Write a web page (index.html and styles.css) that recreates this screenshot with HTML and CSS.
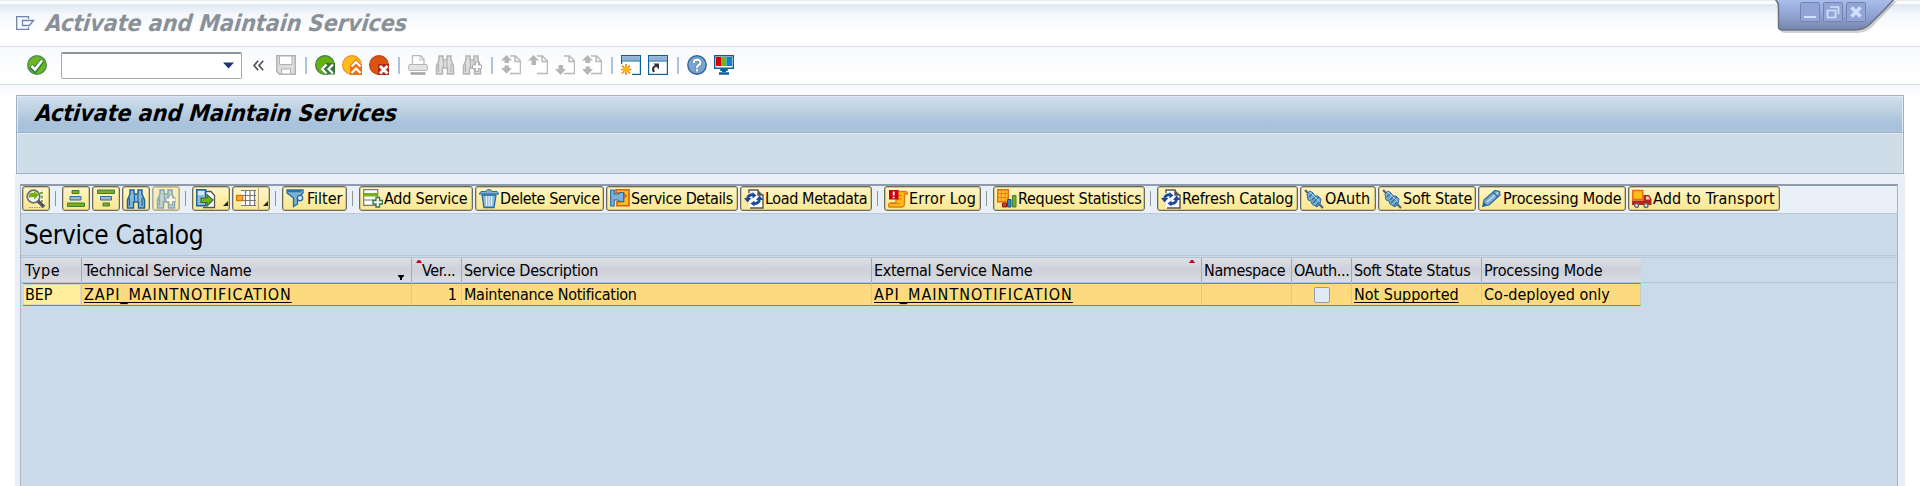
FILE: index.html
```html
<!DOCTYPE html>
<html lang="en">
<head>
<meta charset="utf-8">
<title>Activate and Maintain Services</title>
<link rel="stylesheet" href="styles.css">
</head>
<body>
<svg class="defs" width="0" height="0">
  <symbol id="page" viewBox="0 0 20 20"><path d="M9 1h5.500l5 5v12.500H9M14 1v5.500h5" fill="#fff" stroke="#b9b9b9" stroke-width="1.500"/></symbol>
  <symbol id="binoc" viewBox="0 0 20 20"><path d="M4 1h4v4h4V1h4v4l2.500 6v8h-6v-6h-5v6h-6v-8L4 5z" fill="var(--f)" stroke="var(--s)" stroke-width="1.500"/><path d="M3.500 9v8M16 9v8M8.500 6v6M12 6v6" stroke="var(--s)" stroke-width="1.200"/></symbol>
  <symbol id="reload" viewBox="0 0 20 20"><path d="M5 1h9.500l4.500 4.500V19H5z" fill="#fff"/><path d="M5 4V1h9v5h5v13H6" fill="none" stroke="#555" stroke-width="1.400"/><path d="M14 1l5 5h-5z" fill="#555"/><path d="M3.500 10c0-3 3-5 6-4M15.500 10c0 3.500-3 5-6 4.500" fill="none" stroke="#1f4a9c" stroke-width="2.800"/><path d="M0 9h7.500l-4 4.500zM12 11h7.500l-4-4.500z" fill="#1f4a9c"/><path d="M8.500 3l4 3.500-4 3zM10.500 11.500l-4 3 4 3z" fill="#1f4a9c"/></symbol>
  <symbol id="connector" viewBox="0 0 20 20"><path d="M1 1l18 18" stroke="#666" stroke-width="2.400"/><path d="M3 5l3-3 3 2 2 3 3 0 3 3-1 5-3 3-5-3-1-3-3-1z" fill="#7cacd0" stroke="#2f6f9f" stroke-width="1"/><path d="M5 8l4-4M8 11l4-4M9 14l6-6M12 17l4-5" stroke="#2a6c9e" stroke-width="1.300"/><path d="M6 3l10 10" stroke="#b9d5ea" stroke-width="1"/></symbol>
</svg>

<header class="titlebar">
  <svg class="menu-icon" width="19" height="14" viewBox="0 0 19 14"><path d="M12.500 3V.7H.7v12.600h11.800V11M6.500 4.500h11l-4 5h-7zM9.500 4.500h3" fill="none" stroke="#6d86a8" stroke-width="1.300"/></svg>
  <h1 class="title muted"><span>Activate and Maintain Services</span></h1>
  <div class="window-controls">
    <svg width="124" height="36" viewBox="0 0 124 36">
      <defs><linearGradient id="tab" x1="0" y1="0" x2="0" y2="1"><stop offset="0" stop-color="#aabfee"/><stop offset=".5" stop-color="#93a5d4"/><stop offset="1" stop-color="#7484ab"/></linearGradient></defs>
      <path d="M2 2l3 28q1 3 5 3h72q10 0 16-7L122 1z" fill="#000" opacity=".18"/>
      <path d="M0 -1l3.500 5v23q0 3 3.500 3h73q8 0 14-5l16-16L119 -1z" fill="url(#tab)" stroke="#6b7180" stroke-width="1.500"/>
      <g fill="#93a5d6" stroke="#7384b0"><rect x="25.500" y="2.500" width="19" height="19" rx="1"/><rect x="48.500" y="2.500" width="19" height="19" rx="1"/><rect x="71.500" y="2.500" width="19" height="19" rx="1"/></g>
      <path d="M29 17h12" stroke="#d2e1ff" stroke-width="2"/>
      <path d="M52.500 10.500h8v7h-8zM55 7h8.500v7" fill="none" stroke="#d2e1ff" stroke-width="1.700"/>
      <path d="M76.500 7.500l9 9M85.500 7.500l-9 9" stroke="#d2e1ff" stroke-width="3.400"/>
    </svg>
  </div>
</header>

<nav class="system-bar">
  <svg class="ok" viewBox="0 0 20 20"><circle cx="10" cy="10" r="9.300" fill="#6fb51f" stroke="#4c8f53" stroke-width="1.400"/><path d="M4 11l4 4 7.500-9.500" fill="none" stroke="#2e7a3c" stroke-width="5"/><path d="M4.500 11l3.500 3.500 7-9" fill="none" stroke="#fff" stroke-width="2.600"/></svg>
  <div class="command"><svg width="11" height="7" viewBox="0 0 11 7"><path d="M0 .5h11L5.500 6.500z" fill="#1c376c"/></svg></div>
  <svg class="collapse" width="11" height="11" viewBox="0 0 11 11"><path d="M5.200.8L1 5.500l4.200 4.700M10.200.8L6 5.500l4.200 4.700" fill="none" stroke="#4d4d4d" stroke-width="1.600"/></svg>
  <svg class="save" viewBox="0 0 20 20"><path d="M.7.700h18.600v18.600H3.500L.7 16.500z" fill="#dcdcdc" stroke="#b1b1b1" stroke-width="1.400"/><path d="M3.500 1h12.500v8.500H3.500zM5.500 19v-5h9v5z" fill="#fff" stroke="#b1b1b1"/></svg>
  <i></i>
  <svg viewBox="0 0 20 20"><circle cx="10" cy="10" r="9.400" fill="#66b015" stroke="#417f45" stroke-width="1.200"/><path d="M5 14l6-6h9v11.500h-9z" fill="#39763f"/><path d="M11.500 9.500L7 14l4.500 4.500M18 9.500L13.500 14l4.500 4.500" fill="none" stroke="#fff" stroke-width="2.200"/></svg>
  <svg viewBox="0 0 20 20"><circle cx="10" cy="10" r="9.400" fill="#fdbd16" stroke="#f0902c" stroke-width="1.200"/><path d="M8 10l6-6 6 6v10H8z" fill="#e87316"/><path d="M9.500 11.500L14 7l4.500 4.500M9.500 18L14 13.500l4.500 4.500" fill="none" stroke="#fff" stroke-width="2.200"/></svg>
  <svg viewBox="0 0 20 20"><circle cx="10" cy="10" r="9.400" fill="#dc5410" stroke="#b64a18" stroke-width="1.200"/><path d="M9 9h11v11H9z" fill="#b3271b"/><path d="M11 11l7.500 7.500M18.500 11L11 18.500" stroke="#fff" stroke-width="2.900"/></svg>
  <i></i>
  <svg viewBox="0 0 20 20"><path d="M4.500 10V.7h8l3.500 3.500V10" fill="#fff" stroke="#b9b9b9" stroke-width="1.300"/><path d="M12 1v4h4" fill="none" stroke="#b9b9b9"/><rect x=".7" y="9.500" width="18.600" height="6" rx="1" fill="#e3e3e3" stroke="#b5b5b5"/><path d="M2.500 18.500h15" stroke="#a5a5a5" stroke-width="2.600"/></svg>
  <svg class="gray" viewBox="0 0 20 20"><use href="#binoc"/></svg>
  <svg class="gray" viewBox="0 0 20 20"><use href="#binoc"/><path d="M13.500 7h3v3h3v3.500h-3v3h-3v-3h-3V10h3z" fill="#fff" stroke="#adadad"/></svg>
  <i></i>
  <svg viewBox="0 0 20 20"><use href="#page"/><path d="M5.500 0l5.500 5.500H8V8H3.500V5.500H0zM3.500 10.500H8V13h3l-5.500 5.500L0 13h3.500z" fill="#b5b5b5"/></svg>
  <svg viewBox="0 0 20 20"><use href="#page"/><path d="M5.500 0l5.500 5.500H8V10H3.500V5.500H0z" fill="#b5b5b5"/></svg>
  <svg viewBox="0 0 20 20"><use href="#page"/><path d="M3.500 10H8v4h3l-5.500 6L0 14h3.500z" fill="#b5b5b5"/></svg>
  <svg viewBox="0 0 20 20"><use href="#page"/><path d="M5.500 0l5.500 5.500H8V8H3.500V5.500H0zM3.500 11.500H8V14h3l-5.500 6L0 14h3.500z" fill="#b5b5b5"/></svg>
  <i></i>
  <svg viewBox="0 0 20 20"><rect x=".6" y=".6" width="18.800" height="18.800" fill="#fff" stroke="#0d6295" stroke-width="1.200"/><path d="M1.200 1.200h17.600v4.300H1.200z" fill="#8fb2d6"/><path d="M1 6h18" stroke="#0d6295"/><path d="M0 9h11v11H0z" fill="#fff"/><path d="M5 9v11M-.5 14.500h11M1 10.500l8 8M9 10.500l-8 8" stroke="#f2890e" stroke-width="1.700"/><circle cx="5" cy="14.500" r="3" fill="#fbb911"/></svg>
  <svg viewBox="0 0 20 20"><rect x=".6" y=".6" width="18.800" height="18.800" fill="#fff" stroke="#0d6295" stroke-width="1.200"/><path d="M1.200 1.200h17.600v4.300H1.200z" fill="#8fb2d6"/><path d="M1 6h18" stroke="#0d6295"/><path d="M6 17q-3-5 3-6.500" fill="none" stroke="#333" stroke-width="2.200"/><path d="M5.500 8.500h5.500v6z" fill="#333"/></svg>
  <i></i>
  <svg viewBox="0 0 20 20"><circle cx="10" cy="10" r="9.200" fill="#7ba5ce" stroke="#2d6593" stroke-width="1.400"/><path d="M6.800 8q0-3.500 3.300-3.500T13.400 8q0 1.500-1.800 2.500T10 13M10 14.500v2.300" fill="none" stroke="#4d80ad" stroke-width="3.600"/><path d="M6.800 8q0-3.300 3.300-3.300T13.400 8q0 1.300-1.800 2.300T10 12.800M10 14.300v2.200" fill="none" stroke="#fff" stroke-width="2.200"/></svg>
  <svg viewBox="0 0 20 20"><path d="M.7.700h18.600v12.600H.7z" fill="#fff" stroke="#0d6295" stroke-width="1.400"/><path d="M2 2h5.500v9H2z" fill="#d50000"/><path d="M7.500 2h5v9h-5z" fill="#76b117"/><path d="M12.500 2H18v9h-5.500z" fill="#0b83cc"/><path d="M7.500 14v2M12.500 14v2M5 18.500h10" stroke="#0d6295" stroke-width="2.500"/><path d="M8 15h4" stroke="#0d6295" stroke-width="4"/></svg>
</nav>

<main class="screen">
  <section class="banner">
    <h2 class="title"><span>Activate and Maintain Services</span></h2>
    <div class="banner-sub"></div>
  </section>

  <section class="work">
    <div class="grid-box">
      <div class="toolbar">
        <button class="b sq"><svg viewBox="0 0 20 20"><path d="M12 1h6v16h-6z" fill="#fff"/><path d="M14 4h3M15 8h2M15 12h2" stroke="#76b117" stroke-width="2"/><path d="M3 18.500h12M16 1v17" stroke="#999" stroke-dasharray="1.500 1"/><circle cx="7.500" cy="7.500" r="6.300" fill="#f4f7ef" stroke="#6d6d6d" stroke-width="1.700"/><path d="M3 9q-1.500-6 5-5v-2l5 4-5 4.500V8q-4-.5-5 1z" fill="#76b117"/><path d="M12 12l6 6" stroke="#555" stroke-width="3.600"/></svg></button>
        <i></i>
        <button class="b sq"><svg viewBox="0 0 20 20"><path d="M6 1.500h7v3H6z" fill="#76b117" stroke="#3f7d3c"/><path d="M4 7.500h11v3.500H4z" fill="#93bbdf" stroke="#2f6fa0"/><path d="M1.500 14h17v3.500h-17z" fill="#76b117" stroke="#3f7d3c"/></svg></button>
        <button class="b sq"><svg viewBox="0 0 20 20"><path d="M1.500 1h17v3.500h-17z" fill="#76b117" stroke="#3f7d3c"/><path d="M4.500 7.500h11V11h-11z" fill="#93bbdf" stroke="#2f6fa0"/><path d="M7 14h6.500v3H7z" fill="#76b117" stroke="#3f7d3c"/></svg></button>
        <button class="b sq blue"><svg viewBox="0 0 20 20"><use href="#binoc"/></svg></button>
        <button class="b sq blue off"><svg viewBox="0 0 20 20"><use href="#binoc"/><path d="M13 6h3.500v3H20v3.500h-3.500v3H13v-3h-3V9h3z" fill="#fff" stroke="#3a6aa0"/></svg></button>
        <i></i>
        <button class="b drop"><svg viewBox="0 0 20 20"><path d="M9 2.500h6l3.500 4v12H7" fill="#fff" stroke="#555" stroke-width="1.300"/><path d="M.7.700h9v16h-9z" fill="#8fb8da" stroke="#1d6496" stroke-width="1.400"/><path d="M2 2h6v4H2z" fill="#d6e7f4"/><path d="M5 9h6V5.500l6 5.500-6 6v-3.500H5z" fill="#76b117" stroke="#2f7335" stroke-width="1.200"/></svg><b></b></button>
        <button class="b drop split"><svg viewBox="0 0 20 20"><path d="M5 1.500h14v15H5z" fill="#fff"/><path d="M5 1.500h15M5 6.500h15M5 11.500h15M5 16.500h15M9.500 1v16M14 1v16M18.500 1v16" stroke="#777" stroke-width="1.200"/><rect x=".7" y="6.500" width="6" height="5" fill="#fdbd16" stroke="#e46c12" stroke-width="1.400"/></svg><b></b></button>
        <i></i>
        <button class="b filter"><svg viewBox="0 0 20 20"><path d="M1 1h16v3l-5.500 5v6l-4 2.500V9L1 4z" fill="#7fb0d6" stroke="#236a9d" stroke-width="1.300"/><path d="M2 2.500h13" stroke="#2a6fa3" stroke-width="1.500"/><circle cx="14" cy="9" r="2.700" fill="#dcecf7" stroke="#236a9d" stroke-width="1.300"/></svg><span>Filter</span></button>
        <i></i>
        <button class="b add"><svg viewBox="0 0 20 20"><path d="M.7.700h14v15.600H.7z" fill="#fff" stroke="#777" stroke-width="1.200"/><path d="M1 11h13" stroke="#777"/><path d="M.5 4h14.500v3.500H.5z" fill="#76b117"/><path d="M13 8.500h3.500V11.500h3v3.500h-3V18H13v-3h-3v-3.500h3z" fill="#fff" stroke="#3a7a45" stroke-width="1.400"/></svg><span class="tight-2">Add Service</span></button>
        <button class="b delete"><svg viewBox="0 0 20 20"><path d="M3 6h14l-2 12.500H5z" fill="#8fb8da" stroke="#236a9d" stroke-width="1.300"/><path d="M0 5l2-2.500h5L8.500.7h3L13 2.500h5L20 5z" fill="#7cacd2" stroke="#236a9d"/><path d="M7.500 7v10M10 7v10M12.500 7v10" stroke="#e7f1f9" stroke-width="1.300"/></svg><span class="tight-4">Delete Service</span></button>
        <button class="b details"><svg viewBox="0 0 20 20"><path d="M6 .7h13v16H7v-4h6V9l3-2-3-3H6z" fill="#fdbd16" stroke="#e05a10" stroke-width="1.600"/><path d="M.7 1h3.500v4h4l2-1.500h3.500v9H10l-2-1.500H4.200v6H.7z" fill="#7fb0d6" stroke="#2c6d9d" stroke-width="1.200"/></svg><span class="tight-4">Service Details</span></button>
        <button class="b load"><svg viewBox="0 0 20 20"><use href="#reload"/></svg><span class="tight-4">Load Metadata</span></button>
        <i></i>
        <button class="b errors"><svg viewBox="0 0 20 20"><path d="M8 2.500h9.500q2 0 2 2.500h-3v9q0 4-3 4H1q-1.500-3 1-4h6z" fill="#fdbd16" stroke="#e37a12" stroke-width="1.300"/><path d="M9 6.500h5M9 10h5M2 14.500h10" stroke="#e37a12"/><path d="M1 1h9.500v9.500H1z" fill="#d00010"/><path d="M5.700 2.500v4M5.700 7.700v1.500" stroke="#fff" stroke-width="1.800"/></svg><span class="loose-2">Error Log</span></button>
        <i></i>
        <button class="b stats"><svg viewBox="0 0 20 20"><path d="M.7.700h10.600v12H.7z" fill="#fdc32c" stroke="#e56c12" stroke-width="1.400"/><path d="M4.300 1v12M8 1v12M1 4.500h10M1 8.500h10" stroke="#ec7e16"/><path d="M5.500 14h4v4h-4z" fill="#d0421c" stroke="#8e1b14"/><path d="M10.500 10.500h3.500V18h-3.500z" fill="#2c86bd" stroke="#17547f"/><path d="M15.500 6.500h3.500V18h-3.500z" fill="#76b117" stroke="#3f7d3c"/></svg><span class="tight-3">Request Statistics</span></button>
        <i></i>
        <button class="b refresh"><svg viewBox="0 0 20 20"><use href="#reload"/></svg><span class="tight-2">Refresh Catalog</span></button>
        <button class="b oauth"><svg viewBox="0 0 20 20"><use href="#connector"/></svg><span class="loose-1">OAuth</span></button>
        <button class="b soft"><svg viewBox="0 0 20 20"><use href="#connector"/></svg><span class="tight-2">Soft State</span></button>
        <button class="b mode"><svg viewBox="0 0 20 20"><path d="M1 17l1-6L13 1.500l4.500 1L18 6 7 16z" fill="#7cacd0" stroke="#24699b" stroke-width="1.200"/><path d="M5 13L16 3.500" stroke="#c3dcee" stroke-width="1.300"/><path d="M1 17l3-.8-2-2.200zM11 3l5 5" fill="#234" stroke="#24699b" stroke-width="1.300"/></svg><span class="tight-1">Processing Mode</span></button>
        <button class="b transport"><svg viewBox="0 0 20 20"><path d="M.8 1.500h10v9H.8z" fill="#fdbd16" stroke="#e46c12" stroke-width="1.500"/><path d="M0 11.500h11.500V6H17l2.500 4v6H0z" fill="#b6261c"/><path d="M14 7.500h2.500l1.500 3h-4z" fill="#f5d9d5"/><g fill="#ddd" stroke="#666" stroke-width="1.300"><circle cx="4.500" cy="16.500" r="2"/><circle cx="14" cy="16.500" r="2"/></g></svg><span class="loose-2">Add to Transport</span></button>
      </div>

      <h3 class="grid-title tight-3">Service Catalog</h3>

      <div class="table">
        <div class="row head">
          <div><span class="loose-6">Type</span></div>
          <div><span class="tight-1">Technical Service Name</span><svg class="filtered" width="6" height="5" viewBox="0 0 6 5"><path d="M0 0h6v1L4 3v2H2V3L0 1z"/></svg></div>
          <div class="ver"><svg class="key first" width="6" height="3" viewBox="0 0 6 3"><path d="M0 3l2-3h2l2 3z" fill="#c4002b"/></svg><span class="tight-4">Ver...</span></div>
          <div><span class="tight-3">Service Description</span></div>
          <div><span class="tight-3">External Service Name</span><svg class="key" width="6" height="3" viewBox="0 0 6 3"><path d="M0 3l2-3h2l2 3z" fill="#c4002b"/></svg></div>
          <div><span class="tight-4">Namespace</span></div>
          <div><span class="tight-4">OAuth...</span></div>
          <div><span class="tight-3">Soft State Status</span></div>
          <div><span class="tight-1">Processing Mode</span></div>
        </div>
        <div class="row data">
          <div class="sel"><span class="tight-1">BEP</span></div>
          <div><a class="loose-9">ZAPI_MAINTNOTIFICATION</a></div>
          <div class="num"><span>1</span></div>
          <div><span class="tight-3">Maintenance Notification</span></div>
          <div><a class="loose-10">API_MAINTNOTIFICATION</a></div>
          <div></div>
          <div class="center"><span class="check"></span></div>
          <div><a>Not Supported</a></div>
          <div><span>Co-deployed only</span></div>
        </div>
      </div>
    </div>
  </section>
</main>
</body>
</html>
```
FILE: styles.css
```css
* { box-sizing: border-box; }
body {
  margin: 0;
  width: 1920px;
  height: 486px;
  overflow: hidden;
  display: flex;
  flex-direction: column;
  background: #fff;
  color: #000;
  font: 16px/20px "DejaVu Sans Condensed", "DejaVu Sans", sans-serif;
  font-stretch: condensed;
}
.defs { position: absolute; }
svg { display: block; flex: none; }
h1, h2, h3 { margin: 0; font-weight: normal; }
span, a { white-space: nowrap; }

/* Tracking */
.tight-1 { letter-spacing: -.14px; }
.tight-2 { letter-spacing: -.2px; }
.tight-3 { letter-spacing: -.3px; }
.tight-4 { letter-spacing: -.39px; }
.loose-1 { letter-spacing: .1px; }
.loose-2 { letter-spacing: .2px; }
.loose-6 { letter-spacing: .6px; }
.loose-9 { letter-spacing: .93px; }
.loose-10 { letter-spacing: 1.02px; }

.titlebar {
  position: relative;
  flex: none;
  height: 47px;
  display: flex;
  align-items: center;
  gap: 11px;
  padding: 0 0 1px 16px;
  border-bottom: 1px solid #d5dce5;
  background: linear-gradient(#e3ebf6 0 1px, #fff 1px 4px, #dde7f3 4px, #f4f7fb 14px, #fff 32px);
}
.title { font: italic bold 23px/30px "DejaVu Sans Condensed", "DejaVu Sans", sans-serif; }
.title span { display: inline-block; transform: skewX(-6deg); }
.muted { color: #8a9097; }
.window-controls { position: absolute; left: 1775px; top: 0; }

.system-bar {
  flex: none;
  height: 38px;
  display: flex;
  align-items: center;
  gap: 7px;
  padding: 0 27px 1px;
  border-bottom: 1px solid #d9e0e8;
  background: linear-gradient(#f7f9fc, #fff 70%);
}
.system-bar > svg { width: 20px; height: 20px; }
.system-bar > i { width: 2px; height: 17px; margin: 0 1px 0 2px; background: #a9c4e2; }
.system-bar > .collapse { width: 11px; height: 11px; margin: 0 5px 0 4px; }
.command {
  width: 181px;
  height: 27px;
  margin-left: 7px;
  padding-right: 7px;
  display: flex;
  align-items: center;
  justify-content: flex-end;
  border: 1px solid #a5a9ae;
  border-top: 2px solid #8f9499;
  border-radius: 2px;
  background: #fff;
}
.gray { --f: #dedede; --s: #b3b3b3; }
.blue { --f: #8db9dc; --s: #1d6496; }

.screen {
  flex: 1;
  display: flex;
  flex-direction: column;
  padding: 10px 15px 0 15px;
  background: linear-gradient(#f6f8fb, #fff 14px);
}
.banner {
  flex: none;
  width: 1888px;
  margin-left: 1px;
  border: 1px solid #9db1c7;
  background: #cfdde8;
}
.banner .title {
  height: 37px;
  padding: 1px 0 0 18px;
  border: 1px solid #dfe9f2;
  border-bottom-color: #b8cbdd;
  background: linear-gradient(#cfdeec, #bcd0e0 40%, #aac2dc 75%, #a9c3dc);
}
.banner-sub {
  height: 40px;
  border: 1px solid #e3ecf4;
  border-bottom: 0;
  box-shadow: 0 -1px #9db1c7;
}
.work {
  flex: 1;
  display: flex;
  padding: 10px 7px 0 5px;
  background: #e8eff7;
}
.grid-box {
  flex: 1;
  border: 1px solid #aab5c3;
  border-top: 2px solid #8f9bab;
  border-bottom: 0;
  background: #cbdae9;
}
.toolbar {
  height: 28px;
  display: flex;
  align-items: flex-start;
  gap: 2px;
  padding: 0 1px;
  border-bottom: 1px solid #b9c7d6;
  background: #e9f0f7;
}
.toolbar > i { width: 1px; height: 15px; margin: 5px 4px 0 3px; background: #8f9497; }
.b {
  flex: none;
  height: 25px;
  display: flex;
  align-items: center;
  gap: 1px;
  padding: 0 0 0 3px;
  border: 1px solid #6c6a5a;
  border-radius: 3px;
  box-shadow: inset 0 0 0 1px #d6c684;
  background: linear-gradient(#fdf6cf, #fcefa9 45%, #fbe795);
  color: inherit;
  font: inherit;
}
.b svg { width: 20px; height: 20px; }
.sq { width: 28px; }
.drop { width: 38px; }
.filter { width: 65px; }
.add { width: 114px; }
.delete { width: 129px; }
.details, .load { width: 132px; }
.errors { width: 97px; }
.stats, .transport { width: 152px; }
.refresh { width: 141px; }
.oauth { width: 76px; }
.soft { width: 98px; }
.mode { width: 148px; }
.off { border-color: #aeac95; background: #f6eec2; }
.off svg { opacity: .5; }
.b b {
  align-self: flex-end;
  margin: 0 0 4px 6px;
  border-left: 5px solid transparent;
  border-bottom: 5px solid #222;
}
.split { background: linear-gradient(90deg, transparent 25px, #b5a878 25px 26px, transparent 26px), linear-gradient(#fdf6cf, #fbe795); }

.grid-title {
  height: 42px;
  padding: 3px 0 0 3px;
  border-bottom: 1px solid #b5c5d6;
  font-size: 26px;
  line-height: 37px;
}
.table { margin: 1px 0 0; border-top: 1px solid #b5c5d6; }
.row {
  display: grid;
  grid-template-columns: 59px 330px 50px 410px 330px 90px 60px 130px 159px;
  padding-left: 2px;
}
.row > div { position: relative; padding-left: 2px; }
.head { height: 25px; line-height: 26px; border-bottom: 1px solid #b5c5d6; }
.head > div {
  height: 24px;
  background: linear-gradient(#dcdfe4, #cdd0da 50%, #dadde0);
  border-right: 1px solid #a4abb5;
}
.head > div:last-child { border-right: 0; }
.head .ver { padding-left: 10px; }
.filtered { position: absolute; right: 7px; bottom: 2px; }
.key { position: absolute; right: 6px; top: 2px; }
.key.first { right: auto; left: 4px; }
.data { height: 23px; line-height: 21px; }
.data > div {
  height: 23px;
  border: 1px solid #c6cbc4;
  border-width: 1px 1px 1px 0;
  border-top-color: #d2691e;
  border-bottom-color: #d2691e;
  background: #fcdb80;
}
.data .sel { background: #ffef9c; box-shadow: inset 0 0 0 1px #d8d9c0; }
.data .num { padding: 0 4px 0 0; text-align: right; }
.data .center { display: flex; align-items: center; justify-content: center; padding: 0; }
.check { width: 16px; height: 16px; border: 1px solid #949ba6; border-radius: 2px; background: #dfeaf5; }
.data a { text-decoration: underline; text-decoration-thickness: 1px; text-underline-offset: 2px; text-decoration-skip-ink: none; }
```
